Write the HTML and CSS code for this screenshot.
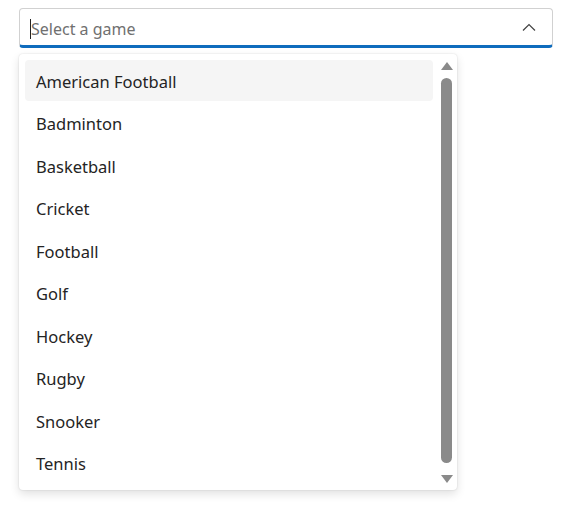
FILE: index.html
```html
<html>
  <head>
    <link rel="stylesheet" href="styles.css">
    <title>Select a game</title>
  </head>
  <body>
    <div class="combo">
      <span class="caret"></span>
      <span class="placeholder">Select a game</span>
      <svg class="chevron" width="14" height="8" viewBox="0 0 14 8">
        <path d="M1 7.5 L7 1.5 L13 7.5" fill="none" stroke="#424242" stroke-width="1.2"/>
      </svg>
    </div>
    <div class="popup">
      <ul class="list">
        <li class="item active">American Football</li>
        <li class="item">Badminton</li>
        <li class="item">Basketball</li>
        <li class="item">Cricket</li>
        <li class="item">Football</li>
        <li class="item">Golf</li>
        <li class="item">Hockey</li>
        <li class="item">Rugby</li>
        <li class="item">Snooker</li>
        <li class="item">Tennis</li>
      </ul>
      <div class="scrollbar">
        <span class="arrow up"></span>
        <span class="thumb"></span>
        <span class="arrow down"></span>
      </div>
    </div>
  </body>
</html>
```

FILE: styles.css
```css
body {
  margin: 0;
  padding: 8px 20px 0 19px;
  font-family: "Noto Sans", "Open Sans", sans-serif;
  background: #fff;
  color: #242424;
}

.combo {
  height: 36px;
  border: 1px solid #d1d1d1;
  border-bottom: 3px solid #0f6cbd;
  border-radius: 4px;
  display: flex;
  align-items: center;
  padding: 0 16px 0 10px;
}

.caret {
  width: 1px;
  height: 20px;
  margin-top: 4px;
  background: #242424;
}

.placeholder {
  flex: 1;
  margin-top: 4px;
  font-size: 16px;
  color: #707070;
}

.chevron {
  margin-top: -1px;
}

.popup {
  margin-top: 6px;
  width: 438px;
  height: 436px;
  box-sizing: border-box;
  border-radius: 4px;
  background: #fff;
  box-shadow: 0 0 2px rgba(0,0,0,0.14), 0 4px 10px rgba(0,0,0,0.12);
  display: flex;
  padding: 6px 4px 6px 6px;
}

.list {
  list-style: none;
  margin: 0;
  padding: 1px 0 0;
  flex: 1;
}

.item {
  height: 42.5px;
  display: flex;
  align-items: center;
  padding-left: 11px;
  font-size: 16.5px;
  border-radius: 4px;
  margin-right: 7px;
}

.item.active {
  height: 41px;
  margin-top: -1px;
  margin-bottom: 1.5px;
  padding-top: 1px;
  box-sizing: border-box;
  background: #f5f5f5;
}

.scrollbar {
  width: 13px;
  display: flex;
  flex-direction: column;
  align-items: center;
}

.arrow {
  width: 0;
  height: 0;
  border-left: 6.5px solid transparent;
  border-right: 6.5px solid transparent;
}

.arrow.up {
  margin-top: 2px;
  border-bottom: 8px solid #8a8a8a;
}

.arrow.down {
  margin-top: 12px;
  border-top: 8px solid #8a8a8a;
}

.thumb {
  width: 11px;
  height: 385px;
  margin-top: 8px;
  border-radius: 6px;
  background: #8a8a8a;
}
```
